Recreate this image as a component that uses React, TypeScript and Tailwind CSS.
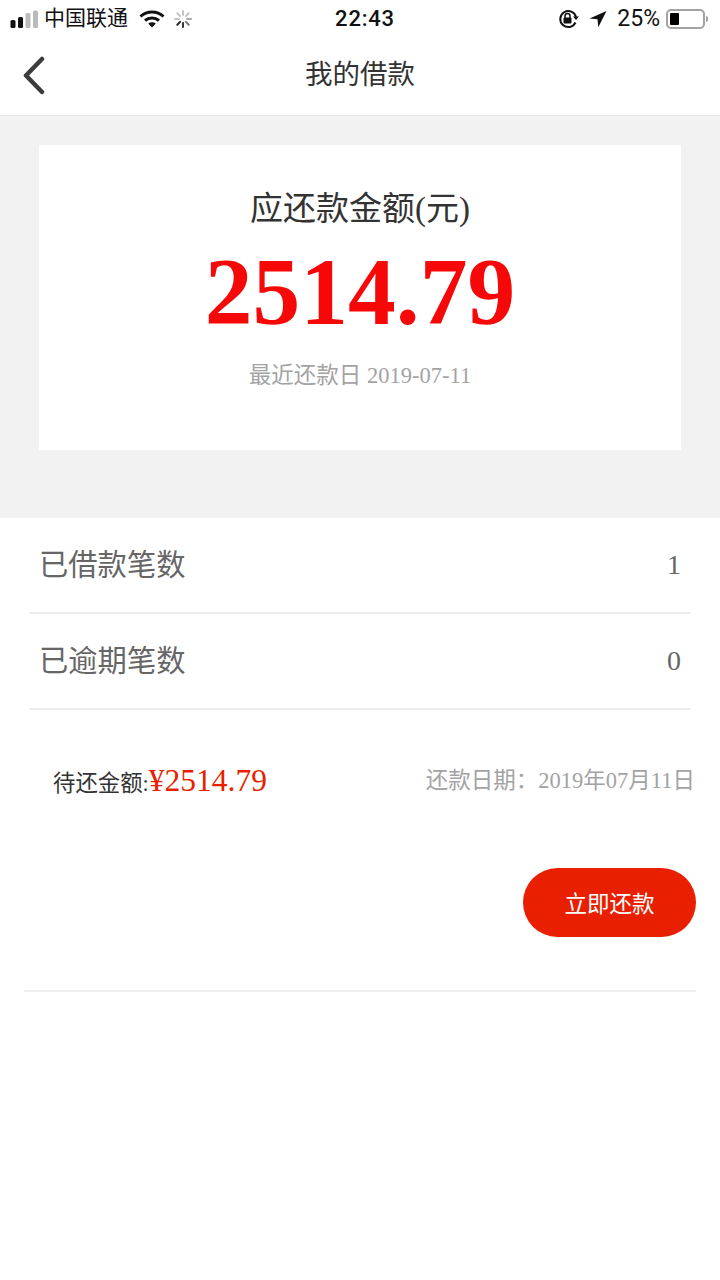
import React from 'react';

const serif = "font-['Liberation_Serif','Noto_Sans_CJK_SC',serif]";

const StatusBar = () => (
  <div className="h-[37px] flex items-center justify-between pl-[10px] pr-[12px] bg-white text-[#111] font-['Roboto','Noto_Sans_CJK_SC',sans-serif]">
    <div className="flex items-center w-[240px]">
      <svg width="29" height="18" viewBox="0 0 29 18" className="mr-[5px]">
        <rect x="0.5" y="10" width="5" height="8" rx="1.5" fill="#111" />
        <rect x="8" y="7" width="5" height="11" rx="1.5" fill="#111" />
        <rect x="15.5" y="3" width="5" height="15" rx="1.5" fill="#bbb" />
        <rect x="23" y="0.5" width="5" height="17.5" rx="1.5" fill="#bbb" />
      </svg>
      <span className="text-[21px] leading-none">中国联通</span>
      <svg width="26" height="18" viewBox="0 0 26 18" className="ml-[11px]">
        <path d="M1.5 6.5C8 .5 18 .5 24.5 6.5" fill="none" stroke="#111" strokeWidth="3" />
        <path d="M6 10.5c4-3.4 10-3.4 14 0" fill="none" stroke="#111" strokeWidth="3" />
        <path d="M9.2 13.6c2.4-1.8 5.2-1.8 7.6 0L13 17.6z" fill="#111" />
      </svg>
      <svg width="18" height="18" viewBox="0 0 18 18" className="ml-[9px]" strokeWidth="2" strokeLinecap="round">
        <path d="M9 1v4" stroke="#c4c4c4" />
        <path d="M14.7 3.3l-2.8 2.8" stroke="#c4c4c4" />
        <path d="M17 9h-4" stroke="#aaa" />
        <path d="M14.7 14.7l-2.8-2.8" stroke="#777" />
        <path d="M9 17v-4" stroke="#333" />
        <path d="M3.3 14.7l2.8-2.8" stroke="#222" />
        <path d="M1 9h4" stroke="#c4c4c4" />
        <path d="M3.3 3.3l2.8 2.8" stroke="#c4c4c4" />
      </svg>
    </div>
    <span className="ml-[12px] text-[22px] font-medium leading-none tracking-[0.8px]">22:43</span>
    <div className="flex items-center justify-end w-[240px]">
      <svg width="21" height="20" viewBox="0 0 21 20">
        <path d="M17.5 13.5A8 8 0 1 1 18 8" fill="none" stroke="#111" strokeWidth="2" />
        <path d="M15 7.5h6l-3 3.5z" fill="#111" />
        <rect x="5.5" y="8.5" width="8" height="6" rx="1" fill="#111" />
        <path d="M7 9V7a2.5 2.5 0 0 1 5 0v2" fill="none" stroke="#111" strokeWidth="1.5" />
      </svg>
      <svg width="18" height="18" viewBox="0 0 18 18" className="ml-[10px]">
        <path d="M17.5 1L0.5 8.5l8 .8.8 8z" fill="#111" />
      </svg>
      <span className="ml-[10px] text-[23px] leading-none">25%</span>
      <div className="ml-[6px] w-[39px] h-[20px] border-2 border-[#a3a3a3] rounded-[5px] p-[2px]">
        <div className="w-[9px] h-full bg-black rounded-[1px]" />
      </div>
      <div className="ml-[1px] w-[2px] h-[6px] bg-[#a3a3a3] rounded-r-full" />
    </div>
  </div>
);

const StatRow = ({ label, value }: { label: string; value: string }) => (
  <div className="h-[96px] mx-[29px] pl-[10px] pr-[10px] pb-[5px] border-b-2 border-[#ececec] flex items-center justify-between text-[#666]">
    <span className="text-[29.3px] font-['Noto_Sans_CJK_SC',sans-serif]">{label}</span>
    <span className={`text-[28px] pt-[5px] ${serif}`}>{value}</span>
  </div>
);

export default function App() {
  return (
    <div className="w-[720px] h-[1280px] bg-white overflow-hidden font-['Noto_Sans_CJK_SC',sans-serif]">
      <StatusBar />

      <div className="h-[79px] relative flex items-center justify-center border-b border-[#e6e6e6] pb-[6px]">
        <svg width="24" height="40" viewBox="0 0 24 40" className="absolute left-[22px] top-[19px]">
          <path d="M20 3L4 19.5 20 36" fill="none" stroke="#3c3c3c" strokeWidth="4.5" strokeLinecap="round" strokeLinejoin="round" />
        </svg>
        <span className="text-[27.5px] text-[#333] leading-none">我的借款</span>
      </div>

      <div className="h-[402px] bg-[#f2f2f2] pt-[29px] px-[39px]">
        <div className="h-[305px] w-[642px] bg-white flex flex-col items-center pt-[40px]">
          <div className={`text-[33px] leading-[48px] text-[#333] ${serif}`}>应还款金额(元)</div>
          <div className={`mt-[4px] text-[95.5px] leading-[110px] font-bold text-[#f70808] ${serif}`}>2514.79</div>
          <div className={`mt-[13px] text-[22.5px] leading-[32px] text-[#a3a3a3] ${serif}`}>最近还款日 2019-07-11</div>
        </div>
      </div>

      <StatRow label="已借款笔数" value="1" />
      <StatRow label="已逾期笔数" value="0" />

      <div className="flex items-center justify-between pl-[53px] pr-[25px] mt-[47px] h-[48px]">
        <div className={`flex items-baseline text-[#333] text-[22.4px] ${serif}`}>
          待还金额:<span className="text-[31.5px] text-[#e81f00]">¥2514.79</span>
        </div>
        <div className={`text-[22.5px] text-[#a3a3a3] ${serif}`}>还款日期：2019年07月11日</div>
      </div>

      <div className="mx-[24px] mt-[63px] h-[124px] border-b-2 border-[#f0f0f0] flex justify-end items-start">
        <button className="w-[173px] h-[69px] rounded-full bg-[#e81f00] text-white text-[22.5px] flex items-center justify-center">
          立即还款
        </button>
      </div>
    </div>
  );
}
